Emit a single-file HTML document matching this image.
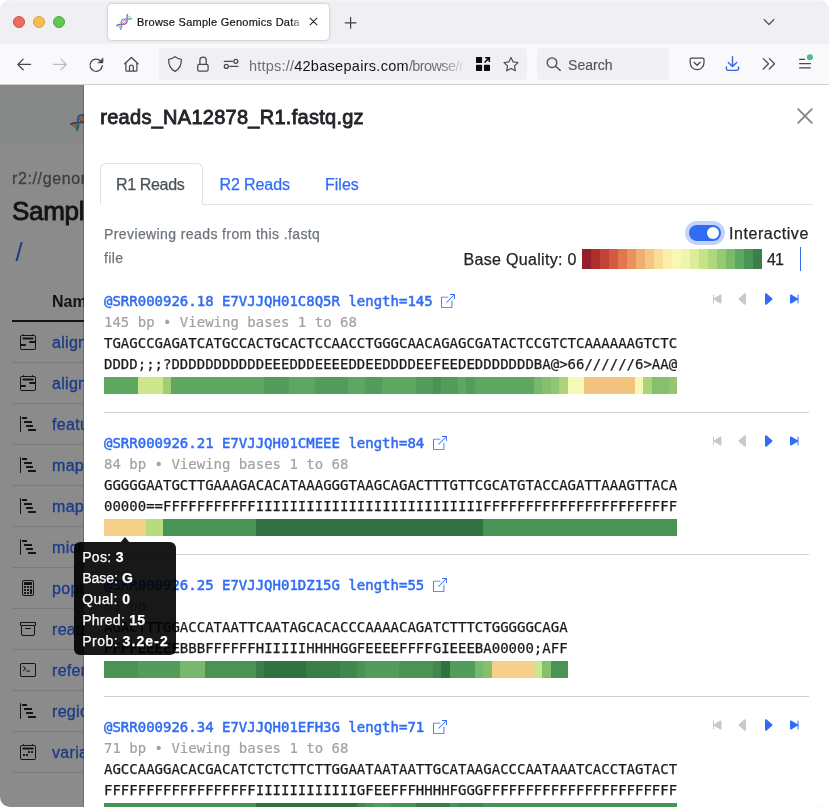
<!DOCTYPE html>
<html lang="en"><head><meta charset="utf-8"><title>Browse Sample Genomics Data</title>
<style>
*{box-sizing:border-box}
html,body{margin:0;padding:0;width:829px;height:807px;overflow:hidden;background:#fff;font-family:"Liberation Sans",sans-serif;color:#222529}
.win{position:absolute;left:0;top:0;width:829px;height:807px;border-radius:10px;overflow:hidden;will-change:transform;background:linear-gradient(#f0f0f4 0,#f0f0f4 85px,#fff 85px,#fff 100%)}
.abs{position:absolute}
.tl{position:absolute;top:16px;width:12px;height:12px;border-radius:50%}
.tabbar{position:absolute;left:0;top:0;width:829px;height:44px;background:#f0f0f4;box-shadow:inset 0 1px 0 #f5f5f8}
.tab{position:absolute;left:108px;top:4px;width:221px;height:36px;background:#fff;border-radius:4px;box-shadow:0 0 3px rgba(0,0,0,.27)}
.tabt{position:absolute;left:29px;top:10.9px;font-size:11px;line-height:14px;white-space:nowrap;color:#15141a;width:171px;overflow:hidden;letter-spacing:.26px;-webkit-text-stroke-width:.2px}
.toolbar{position:absolute;left:0;top:44px;width:829px;height:41px;background:#f9f9fb;border-bottom:1px solid #cfcfd2}
.url{position:absolute;left:159px;top:4px;width:368px;height:32px;border-radius:4px;background:#f0f0f4}
.search{position:absolute;left:537px;top:4px;width:132px;height:32px;border-radius:4px;background:#f0f0f4}
.page{position:absolute;left:0;top:85px;width:829px;height:722px;background:#fff;overflow:hidden}
/* underlying page */
.under{position:absolute;left:0;top:0;width:84px;height:722px;background:#fff;overflow:hidden}
.unav{position:absolute;left:0;top:0;width:829px;height:59px;background:#f6f9f7}
.tr{position:absolute;left:12px;width:800px;height:41px;border-bottom:1px solid #dfe2e6}
.tr svg{position:absolute;left:8px;top:12.5px}
.tr a{position:absolute;left:40px;top:9px;font-size:16px;line-height:24px;color:#316cf4;white-space:nowrap;letter-spacing:.3px;-webkit-text-stroke:.3px #316cf4}
.backdrop{position:absolute;left:0;top:0;width:84px;height:722px;background:rgba(0,0,0,.455)}
/* panel */
.panel{position:absolute;left:84px;top:0;width:745px;height:722px;background:#fff;box-shadow:-1px 0 0 rgba(0,0,0,.22)}
.title{position:absolute;left:16.3px;top:17.2px;font-size:20px;line-height:30px;font-weight:normal;-webkit-text-stroke:.85px #222529;letter-spacing:.27px;white-space:nowrap;color:#222529}
.tabs{position:absolute;left:16px;top:78px;width:713px;height:42px;border-bottom:1px solid #dfe2e6}
.tabs .act{position:absolute;left:0;top:0;width:102.5px;height:42px;border:1px solid #dfe2e6;border-bottom-color:#fff;border-radius:6px 6px 0 0;background:#fff}
.tabs span{position:absolute;top:10.3px;font-size:16px;line-height:24px;white-space:nowrap}
.prev{position:absolute;left:20px;top:137.2px;font-size:14px;line-height:24px;color:#6e757c;width:260px;letter-spacing:.4px}
.sw{position:absolute;left:605.2px;top:140.3px;width:32px;height:16px;border-radius:8px;background:#316cf4;box-shadow:0 0 0 3.9px #c4d4f9}
.sw:after{content:"";position:absolute;right:2px;top:2px;width:12px;height:12px;border-radius:50%;background:#fff}
.lbl{position:absolute;font-size:16px;line-height:24px;white-space:nowrap}
.lbl,.prev,.tabs span,.tip{-webkit-text-stroke-width:.25px}
.legend{position:absolute;left:498px;top:164px;width:180px;height:19.7px}
.legend i,.qb i{position:absolute;top:0;height:100%;display:block}
.read{position:absolute;left:20px;width:709px;height:142px;font-family:"DejaVu Sans Mono","Liberation Mono",monospace;font-size:14px;line-height:21px}
.read>div{white-space:pre;height:21px}
.rh{color:#316cf4;font-weight:normal;-webkit-text-stroke:.5px #316cf4}
.rh span{letter-spacing:-.0013px}
.ext{position:absolute;left:337px;top:2.6px;fill:#316cf4}
.ri{color:#a2a2a2;-webkit-text-stroke-width:.2px}
.rs{color:#1b1b1b;-webkit-text-stroke-width:.25px}
.read>div.qb{position:absolute;left:0;top:85.6px;height:16.8px;width:600px}
.nv{position:absolute;top:-.4px}
.read>div.hr{position:absolute;left:0;top:120.6px;width:705px;height:1px;background:#d1d2d3}
/* tooltip */
.tip{position:absolute;left:74px;top:457px;width:102px;height:113px;background:#000;border-radius:6px;opacity:.9;color:#fff;font-size:14px;line-height:21px;padding:5px 0 0 8.2px;white-space:nowrap}
.tip:before{content:"";position:absolute;left:45.6px;top:-5.5px;border-left:5.5px solid transparent;border-right:5.5px solid transparent;border-bottom:6px solid #000}
.tip b{font-weight:bold}
</style></head><body>
<div class="win">
 <div class="tabbar">
  <div class="tl" style="left:13px;background:#ed6b5f;border:.5px solid #d05247"></div>
  <div class="tl" style="left:33px;background:#f5bf4f;border:.5px solid #d6a243"></div>
  <div class="tl" style="left:53px;background:#62c554;border:.5px solid #52a73f"></div>
  <div class="tab">
   <svg class="abs" style="left:8px;top:10px" width="16" height="16" viewBox="0 0 16 16"><g fill="none" stroke-linecap="round"><path d="M12.300 1.800l1.500 1.500M11.600 3.300l1.300 1.300" stroke="#7cc36a" stroke-width=".9"/><path d="M11.300 4.600l.9.900M13.400 2.300l1.300 1.300" stroke="#f2b04c" stroke-width=".9"/><path d="M6.600 6.700l2.600 2.600M7.800 6l2.200 2.200" stroke="#f2b04c" stroke-width=".9"/><path d="M6.100 8l1.900 1.900" stroke="#e8706a" stroke-width=".9"/><path d="M9 6l1.200 1.200" stroke="#7cc36a" stroke-width=".9"/><path d="M1.800 11.800l2.600 2.600M3.200 11.300l1.900 1.900" stroke="#7cc36a" stroke-width=".9"/><path d="M2.600 12.300l1.500 1.500M4.400 11.200l1 1" stroke="#f2b04c" stroke-width=".9"/><path d="M11.500.5C10.300 3 11.800 6 10.800 8.200 9.800 10.600 7 10.600 4.500 10.400 3 10.300 1.500 10.800.5 11.500" stroke="#8a5ad0" stroke-width="1.250"/><path d="M15.600 4.600C13.500 6 10 5 7.500 5.300 4.800 5.800 5 8.500 5.500 10.500 5.900 12.500 5.300 14.300 4.500 15.500" stroke="#4e9fe6" stroke-width="1.250"/></g></svg>
   <div class="tabt">Browse Sample Genomics Data - 42basepairs</div>
   <div class="abs" style="left:183px;top:8px;width:16px;height:20px;background:linear-gradient(90deg,rgba(255,255,255,0),#fff 80%)"></div>
   <svg class="abs" style="left:200.600px;top:13.200px" width="9" height="9" viewBox="0 0 9 9" stroke="#2b2a33" stroke-width="1.100" stroke-linecap="round"><path d="M1.100 1.100l6.800 6.800M7.900 1.100l-6.800 6.800"/></svg>
  </div>
  <svg class="abs" style="left:344px;top:16px" width="14" height="14" viewBox="0 0 14 14" stroke="#3f3e49" stroke-width="1.200" stroke-linecap="round"><path d="M6.600 1.400v10.800M1.200 6.800h10.800"/></svg>
  <svg class="abs" style="left:763px;top:17.500px" width="12" height="9" viewBox="0 0 12 9" fill="none" stroke="#5b5b66" stroke-width="1.400" stroke-linecap="butt" stroke-linejoin="miter"><path d="M.8 1.300l5.200 5.200 5.200-5.200"/></svg>
 </div>
 <div class="toolbar">
  <div class="url"></div>
  <div class="search"></div>
  <div class="abs" style="left:249px;top:12.500px;font-size:14.500px;line-height:18px;white-space:nowrap;color:#6e6d78;width:218px;overflow:hidden;letter-spacing:.2px">https://<span style="color:#15141a;letter-spacing:.29px">42basepairs.com</span><span style="letter-spacing:-.6px">/browse/reads</span></div>
  <div class="abs" style="left:440px;top:9px;width:30px;height:24px;background:linear-gradient(90deg,rgba(240,240,244,0),#f0f0f4 85%)"></div>
  <div class="abs" style="left:568px;top:12.300px;font-size:14px;line-height:18px;color:#55545f;letter-spacing:.05px;-webkit-text-stroke-width:.15px">Search</div>
  <svg class="abs" style="left:0;top:0" width="829" height="41" viewBox="0 44 829 41" fill="none" stroke="#484852" stroke-width="1.250" stroke-linecap="round" stroke-linejoin="round">
   <path d="M30.500 64.450H17.900M23.200 59.100l-5.350 5.350 5.350 5.350"/>
   <path d="M53.400 64.450h12.900M61 59.100l5.350 5.350L61 69.800" stroke="#bdbdc4"/>
   <path d="M100.700 61.200A6.100 6.100 0 1 0 102.200 65.600"/>
   <path d="M103 58.200v4.700h-4.900z" fill="#484852" stroke-width=".6"/>
   <path d="M124.700 63.800l6.700-6.300 6.700 6.300M125.900 63v7.200a1 1 0 0 0 1 1h9a1 1 0 0 0 1-1V63M129.500 71v-4a1.900 1.900 0 0 1 3.800 0v4"/>
   <path d="M175 56.700c2 1.400 4.200 2.300 6.300 2.600.3 5.300-1.600 9.600-6.300 12.100-4.700-2.500-6.600-6.800-6.300-12.100 2.100-.3 4.300-1.200 6.300-2.600z"/>
   <rect x="197.700" y="64.300" width="10.400" height="6.800" rx="1.600"/><path d="M199.900 64.200v-3.900a3.150 3.150 0 0 1 6.300 0v3.900"/>
   <path d="M224.200 61.300h8.200M229.700 66.400h8.200"/><circle cx="235.800" cy="61.300" r="2"/><circle cx="226.300" cy="66.400" r="2"/>
   <g fill="#0c0c0d" stroke="none"><rect x="476" y="57" width="6.100" height="6.100" rx=".6"/><rect x="476" y="64.800" width="6.100" height="6.100" rx=".6"/><rect x="483.900" y="64.800" width="6.100" height="6.100" rx=".6"/><path d="M485.200 57h4.900v4.900h-1.600v-2.200l-3.400 3.400-1.100-1.100 3.400-3.400h-2.200z"/></g>
   <path d="M511 57.400l2.150 4.500 4.850.65-3.550 3.400.9 4.850-4.350-2.350-4.350 2.350.9-4.850-3.550-3.400 4.850-.65z" stroke-width="1.150"/>
   <circle cx="552" cy="62.700" r="4.800" stroke-width="1.300"/><path d="M555.500 66.200l4.900 4.200" stroke-width="1.300"/>
   <path d="M691.500 58.200h11.200a1.300 1.300 0 0 1 1.300 1.300v3.300a6.900 6.900 0 0 1-13.800 0v-3.300a1.300 1.300 0 0 1 1.300-1.300z"/><path d="M694 62.300l3.100 3 3.100-3"/>
   <g stroke="#2f63d8" stroke-width="1.350"><path d="M732.500 56.600v9.800M728.300 62.400l4.200 4.200 4.200-4.200M726.400 66.800v1.900a1.600 1.600 0 0 0 1.600 1.600h9a1.600 1.600 0 0 0 1.600-1.600v-1.900"/></g>
   <path d="M763.300 58.600l5.200 5.200-5.200 5.200M769.300 58.600l5.200 5.200-5.200 5.200"/>
   <path d="M799.600 59.400h5M799.600 63.600h10.800M799.600 67.800h10.800"/>
   <circle cx="809.900" cy="57.200" r="3" fill="#4fb98f" stroke="none"/>
  </svg>
 </div>

 <div class="page">
  <div class="under">
   <div class="unav"></div>
   <svg class="abs" style="left:70.100px;top:21.900px" width="24" height="24" viewBox="0 0 16 16"><g fill="none" stroke-linecap="round"><path d="M12.300 1.800l1.500 1.500M11.600 3.300l1.300 1.300" stroke="#7cc36a" stroke-width=".9"/><path d="M11.300 4.600l.9.900M13.400 2.300l1.300 1.300" stroke="#f2b04c" stroke-width=".9"/><path d="M6.600 6.700l2.600 2.600M7.800 6l2.200 2.200" stroke="#f2b04c" stroke-width=".9"/><path d="M6.100 8l1.900 1.900" stroke="#e8706a" stroke-width=".9"/><path d="M9 6l1.200 1.200" stroke="#7cc36a" stroke-width=".9"/><path d="M1.800 11.800l2.600 2.600M3.200 11.300l1.900 1.900" stroke="#7cc36a" stroke-width=".9"/><path d="M2.600 12.300l1.500 1.500M4.400 11.200l1 1" stroke="#f2b04c" stroke-width=".9"/><path d="M11.500.5C10.300 3 11.800 6 10.800 8.200 9.800 10.600 7 10.600 4.500 10.400 3 10.300 1.500 10.800.5 11.500" stroke="#8a5ad0" stroke-width="1.250"/><path d="M15.600 4.600C13.500 6 10 5 7.500 5.300 4.800 5.800 5 8.500 5.500 10.500 5.900 12.500 5.300 14.300 4.500 15.500" stroke="#4e9fe6" stroke-width="1.250"/></g></svg>
   <div class="abs" style="left:12px;top:82.200px;font-size:16px;line-height:24px;color:#6e757c;white-space:nowrap;letter-spacing:.62px;-webkit-text-stroke-width:.3px">r2://genomics-data/</div>
   <div class="abs" style="left:12px;top:108px;font-size:26px;line-height:36px;font-weight:normal;-webkit-text-stroke:.85px #222529;color:#222529;white-space:nowrap;letter-spacing:-.3px">Sample Data</div>
   <div class="abs" style="left:15.500px;top:152px;font-size:26px;line-height:30px;color:#316cf4">/</div>
   <div class="abs" style="left:52px;top:204.700px;font-size:16px;line-height:24px;font-weight:bold;color:#222529">Name</div>
   <div class="abs" style="left:12px;top:235px;width:800px;height:2px;background:#222529"></div>
   <div class="tr" style="top:236.5px"><svg viewBox="0 0 16 16" width="16" height="16" fill="#222529"><path d="M3.5 0a.5.5 0 0 1 .5.5V1h8V.5a.5.5 0 0 1 1 0V1h1a2 2 0 0 1 2 2v11a2 2 0 0 1-2 2H2a2 2 0 0 1-2-2V3a2 2 0 0 1 2-2h1V.5a.5.5 0 0 1 .5-.5M2 2a1 1 0 0 0-1 1v11a1 1 0 0 0 1 1h12a1 1 0 0 0 1-1V3a1 1 0 0 0-1-1z"/><path d="M2.5 4a.5.5 0 0 1 .5-.5h10a.5.5 0 0 1 .5.5v1a.5.5 0 0 1-.5.5H3a.5.5 0 0 1-.5-.5zM9 8a1 1 0 0 1 1-1h5v2h-5a1 1 0 0 1-1-1m-8 2h4a1 1 0 1 1 0 2H1z"/></svg><a>alignments_bam</a></div>
<div class="tr" style="top:277.5px"><svg viewBox="0 0 16 16" width="16" height="16" fill="#222529"><path d="M3.5 0a.5.5 0 0 1 .5.5V1h8V.5a.5.5 0 0 1 1 0V1h1a2 2 0 0 1 2 2v11a2 2 0 0 1-2 2H2a2 2 0 0 1-2-2V3a2 2 0 0 1 2-2h1V.5a.5.5 0 0 1 .5-.5M2 2a1 1 0 0 0-1 1v11a1 1 0 0 0 1 1h12a1 1 0 0 0 1-1V3a1 1 0 0 0-1-1z"/><path d="M2.5 4a.5.5 0 0 1 .5-.5h10a.5.5 0 0 1 .5.5v1a.5.5 0 0 1-.5.5H3a.5.5 0 0 1-.5-.5zM9 8a1 1 0 0 1 1-1h5v2h-5a1 1 0 0 1-1-1m-8 2h4a1 1 0 1 1 0 2H1z"/></svg><a>alignments_cram</a></div>
<div class="tr" style="top:318.5px"><svg viewBox="0 0 16 16" width="16" height="16" fill="#222529"><path d="M.5 0a.5.5 0 0 1 .5.5v15a.5.5 0 0 1-1 0V.5A.5.5 0 0 1 .5 0M2 1.5a.5.5 0 0 1 .5-.5h4a.5.5 0 0 1 .5.5v1a.5.5 0 0 1-.5.5h-4a.5.5 0 0 1-.5-.5zm2 4a.5.5 0 0 1 .5-.5h7a.5.5 0 0 1 .5.5v1a.5.5 0 0 1-.5.5h-7a.5.5 0 0 1-.5-.5zm2 4a.5.5 0 0 1 .5-.5h6a.5.5 0 0 1 .5.5v1a.5.5 0 0 1-.5.5h-6a.5.5 0 0 1-.5-.5zm2 4a.5.5 0 0 1 .5-.5h7a.5.5 0 0 1 .5.5v1a.5.5 0 0 1-.5.5h-7a.5.5 0 0 1-.5-.5z"/></svg><a>features_bed</a></div>
<div class="tr" style="top:359.5px"><svg viewBox="0 0 16 16" width="16" height="16" fill="#222529"><path d="M.5 0a.5.5 0 0 1 .5.5v15a.5.5 0 0 1-1 0V.5A.5.5 0 0 1 .5 0M2 1.5a.5.5 0 0 1 .5-.5h4a.5.5 0 0 1 .5.5v1a.5.5 0 0 1-.5.5h-4a.5.5 0 0 1-.5-.5zm2 4a.5.5 0 0 1 .5-.5h7a.5.5 0 0 1 .5.5v1a.5.5 0 0 1-.5.5h-7a.5.5 0 0 1-.5-.5zm2 4a.5.5 0 0 1 .5-.5h6a.5.5 0 0 1 .5.5v1a.5.5 0 0 1-.5.5h-6a.5.5 0 0 1-.5-.5zm2 4a.5.5 0 0 1 .5-.5h7a.5.5 0 0 1 .5.5v1a.5.5 0 0 1-.5.5h-7a.5.5 0 0 1-.5-.5z"/></svg><a>mappability</a></div>
<div class="tr" style="top:400.5px"><svg viewBox="0 0 16 16" width="16" height="16" fill="#222529"><path d="M.5 0a.5.5 0 0 1 .5.5v15a.5.5 0 0 1-1 0V.5A.5.5 0 0 1 .5 0M2 1.5a.5.5 0 0 1 .5-.5h4a.5.5 0 0 1 .5.5v1a.5.5 0 0 1-.5.5h-4a.5.5 0 0 1-.5-.5zm2 4a.5.5 0 0 1 .5-.5h7a.5.5 0 0 1 .5.5v1a.5.5 0 0 1-.5.5h-7a.5.5 0 0 1-.5-.5zm2 4a.5.5 0 0 1 .5-.5h6a.5.5 0 0 1 .5.5v1a.5.5 0 0 1-.5.5h-6a.5.5 0 0 1-.5-.5zm2 4a.5.5 0 0 1 .5-.5h7a.5.5 0 0 1 .5.5v1a.5.5 0 0 1-.5.5h-7a.5.5 0 0 1-.5-.5z"/></svg><a>mappings</a></div>
<div class="tr" style="top:441.5px"><svg viewBox="0 0 16 16" width="16" height="16" fill="#222529"><path d="M.5 0a.5.5 0 0 1 .5.5v15a.5.5 0 0 1-1 0V.5A.5.5 0 0 1 .5 0M2 1.5a.5.5 0 0 1 .5-.5h4a.5.5 0 0 1 .5.5v1a.5.5 0 0 1-.5.5h-4a.5.5 0 0 1-.5-.5zm2 4a.5.5 0 0 1 .5-.5h7a.5.5 0 0 1 .5.5v1a.5.5 0 0 1-.5.5h-7a.5.5 0 0 1-.5-.5zm2 4a.5.5 0 0 1 .5-.5h6a.5.5 0 0 1 .5.5v1a.5.5 0 0 1-.5.5h-6a.5.5 0 0 1-.5-.5zm2 4a.5.5 0 0 1 .5-.5h7a.5.5 0 0 1 .5.5v1a.5.5 0 0 1-.5.5h-7a.5.5 0 0 1-.5-.5z"/></svg><a>microsatellites</a></div>
<div class="tr" style="top:482.5px"><svg viewBox="0 0 16 16" width="16" height="16" fill="#222529"><path d="M12 1a1 1 0 0 1 1 1v12a1 1 0 0 1-1 1H4a1 1 0 0 1-1-1V2a1 1 0 0 1 1-1zM4 0a2 2 0 0 0-2 2v12a2 2 0 0 0 2 2h8a2 2 0 0 0 2-2V2a2 2 0 0 0-2-2z"/><path d="M4 2.5a.5.5 0 0 1 .5-.5h7a.5.5 0 0 1 .5.5v2a.5.5 0 0 1-.5.5h-7a.5.5 0 0 1-.5-.5zm0 4a.5.5 0 0 1 .5-.5h1a.5.5 0 0 1 .5.5v1a.5.5 0 0 1-.5.5h-1a.5.5 0 0 1-.5-.5zm0 3a.5.5 0 0 1 .5-.5h1a.5.5 0 0 1 .5.5v1a.5.5 0 0 1-.5.5h-1a.5.5 0 0 1-.5-.5zm0 3a.5.5 0 0 1 .5-.5h1a.5.5 0 0 1 .5.5v1a.5.5 0 0 1-.5.5h-1a.5.5 0 0 1-.5-.5zm3-6a.5.5 0 0 1 .5-.5h1a.5.5 0 0 1 .5.5v1a.5.5 0 0 1-.5.5h-1a.5.5 0 0 1-.5-.5zm0 3a.5.5 0 0 1 .5-.5h1a.5.5 0 0 1 .5.5v1a.5.5 0 0 1-.5.5h-1a.5.5 0 0 1-.5-.5zm0 3a.5.5 0 0 1 .5-.5h1a.5.5 0 0 1 .5.5v1a.5.5 0 0 1-.5.5h-1a.5.5 0 0 1-.5-.5zm3-6a.5.5 0 0 1 .5-.5h1a.5.5 0 0 1 .5.5v1a.5.5 0 0 1-.5.5h-1a.5.5 0 0 1-.5-.5zm0 3a.5.5 0 0 1 .5-.5h1a.5.5 0 0 1 .5.5v4a.5.5 0 0 1-.5.5h-1a.5.5 0 0 1-.5-.5z"/></svg><a>population</a></div>
<div class="tr" style="top:523.5px"><svg viewBox="0 0 16 16" width="16" height="16" fill="#222529"><path d="M0 2a1 1 0 0 1 1-1h14a1 1 0 0 1 1 1v2a1 1 0 0 1-1 1v7.5a2.5 2.5 0 0 1-2.5 2.5h-9A2.5 2.5 0 0 1 1 12.500V5a1 1 0 0 1-1-1zm2 3v7.5A1.500 1.500 0 0 0 3.500 14h9a1.500 1.500 0 0 0 1.500-1.500V5zm13-3H1v2h14zM5 7.500a.5.5 0 0 1 .5-.5h5a.5.5 0 0 1 0 1h-5a.5.5 0 0 1-.5-.5"/></svg><a>reads_fastq</a></div>
<div class="tr" style="top:564.5px"><svg viewBox="0 0 16 16" width="16" height="16" fill="#222529"><path d="M6 9a.5.5 0 0 1 .5-.5h3a.5.5 0 0 1 0 1h-3A.5.5 0 0 1 6 9M3.854 4.146a.5.5 0 1 0-.708.708L4.793 6.500 3.146 8.146a.5.5 0 1 0 .708.708l2-2a.5.5 0 0 0 0-.708z"/><path d="M2 1a2 2 0 0 0-2 2v10a2 2 0 0 0 2 2h12a2 2 0 0 0 2-2V3a2 2 0 0 0-2-2zm12 1a1 1 0 0 1 1 1v10a1 1 0 0 1-1 1H2a1 1 0 0 1-1-1V3a1 1 0 0 1 1-1z"/></svg><a>reference</a></div>
<div class="tr" style="top:605.5px"><svg viewBox="0 0 16 16" width="16" height="16" fill="#222529"><path d="M.5 0a.5.5 0 0 1 .5.5v15a.5.5 0 0 1-1 0V.5A.5.5 0 0 1 .5 0M2 1.5a.5.5 0 0 1 .5-.5h4a.5.5 0 0 1 .5.5v1a.5.5 0 0 1-.5.5h-4a.5.5 0 0 1-.5-.5zm2 4a.5.5 0 0 1 .5-.5h7a.5.5 0 0 1 .5.5v1a.5.5 0 0 1-.5.5h-7a.5.5 0 0 1-.5-.5zm2 4a.5.5 0 0 1 .5-.5h6a.5.5 0 0 1 .5.5v1a.5.5 0 0 1-.5.5h-6a.5.5 0 0 1-.5-.5zm2 4a.5.5 0 0 1 .5-.5h7a.5.5 0 0 1 .5.5v1a.5.5 0 0 1-.5.5h-7a.5.5 0 0 1-.5-.5z"/></svg><a>regions_bed</a></div>
<div class="tr" style="top:646.5px"><svg viewBox="0 0 16 16" width="16" height="16" fill="#222529"><path d="M3.5 0a.5.5 0 0 1 .5.5V1h8V.5a.5.5 0 0 1 1 0V1h1a2 2 0 0 1 2 2v11a2 2 0 0 1-2 2H2a2 2 0 0 1-2-2V3a2 2 0 0 1 2-2h1V.5a.5.5 0 0 1 .5-.5M2 2a1 1 0 0 0-1 1v11a1 1 0 0 0 1 1h12a1 1 0 0 0 1-1V3a1 1 0 0 0-1-1z"/><path d="M2.5 4a.5.5 0 0 1 .5-.5h10a.5.5 0 0 1 .5.5v1a.5.5 0 0 1-.5.5H3a.5.5 0 0 1-.5-.5zM11 7.500a.5.5 0 0 1 .5-.5h1a.5.5 0 0 1 .5.5v1a.5.5 0 0 1-.5.5h-1a.5.5 0 0 1-.5-.5zm-3 0a.5.5 0 0 1 .5-.5h1a.5.5 0 0 1 .5.5v1a.5.5 0 0 1-.5.5h-1a.5.5 0 0 1-.5-.5zm-5 3a.5.5 0 0 1 .5-.5h1a.5.5 0 0 1 .5.5v1a.5.5 0 0 1-.5.5h-1a.5.5 0 0 1-.5-.5zm3 0a.5.5 0 0 1 .5-.5h1a.5.5 0 0 1 .5.5v1a.5.5 0 0 1-.5.5h-1a.5.5 0 0 1-.5-.5z"/></svg><a>variants_vcf</a></div>
  </div>
  <div class="backdrop"></div>
  <div class="panel">
   <div class="title">reads_NA12878_R1.fastq.gz</div>
   <svg class="abs" style="left:712.900px;top:23px" width="16" height="16" viewBox="0 0 16 16" stroke="#868686" stroke-width="1.900" stroke-linecap="round"><path d="M1.200 1.200l13.600 13.600M14.800 1.200 1.200 14.800"/></svg>
   <div class="tabs">
    <div class="act"></div>
    <span style="left:16px;color:#495057;letter-spacing:-.35px">R1 Reads</span>
    <span style="left:119.500px;color:#316cf4;letter-spacing:-.1px">R2 Reads</span>
    <span style="left:225px;color:#316cf4">Files</span>
   </div>
   <div class="prev">Previewing reads from this .fastq<br>file</div>
   <div class="sw"></div>
   <div class="lbl" style="left:645px;top:137px;letter-spacing:.55px">Interactive</div>
   <div class="lbl" style="left:379.500px;top:163px;letter-spacing:.32px">Base Quality: 0</div>
   <div class="legend"><i style="left:0px;width:9.3px;background:#971d2b"></i><i style="left:9px;width:9.3px;background:#ae2d2f"></i><i style="left:18px;width:9.3px;background:#c34136"></i><i style="left:27px;width:9.3px;background:#d45a41"></i><i style="left:36px;width:9.3px;background:#e1764f"></i><i style="left:45px;width:9.3px;background:#ea925e"></i><i style="left:54px;width:9.3px;background:#f0af6f"></i><i style="left:63px;width:9.3px;background:#f4c882"></i><i style="left:72px;width:9.3px;background:#f9de98"></i><i style="left:81px;width:9.3px;background:#fbefac"></i><i style="left:90px;width:9.3px;background:#f8f7b6"></i><i style="left:99px;width:9.3px;background:#edf6ac"></i><i style="left:108px;width:9.3px;background:#dbed99"></i><i style="left:117px;width:9.3px;background:#c6e388"></i><i style="left:126px;width:9.3px;background:#afd77b"></i><i style="left:135px;width:9.3px;background:#95c973"></i><i style="left:144px;width:9.3px;background:#7aba6b"></i><i style="left:153px;width:9.3px;background:#5fa862"></i><i style="left:162px;width:9.3px;background:#499456"></i><i style="left:171px;width:9.3px;background:#3a7e49"></i></div>
   <div class="lbl" style="left:683px;top:163px;letter-spacing:-.9px">41</div>
   <div class="abs" style="left:716px;top:162px;width:1px;height:24px;background:#316cf4"></div>
   <div class="read" style="top:206.39999999999998px">
<div class="rh"><span>@SRR000926.18 E7VJJQH01C8Q5R length=145</span><svg class="ext" style="left:337.1px" viewBox="0 0 16 16" width="14" height="14"><path fill-rule="evenodd" d="M8.636 3.5a.5.5 0 0 0-.5-.5H1.5A1.5 1.5 0 0 0 0 4.5v10A1.5 1.5 0 0 0 1.5 16h10a1.5 1.5 0 0 0 1.5-1.5V7.864a.5.5 0 0 0-1 0V14.5a.5.5 0 0 1-.5.5h-10a.5.5 0 0 1-.5-.5v-10a.5.5 0 0 1 .5-.5h6.636a.5.5 0 0 0 .5-.5"/><path fill-rule="evenodd" d="M16 .5a.5.5 0 0 0-.5-.5h-5a.5.5 0 0 0 0 1h3.793L6.146 9.146a.5.5 0 1 0 .708.708L15 1.707V5.5a.5.5 0 0 0 1 0z"/></svg></div>
<div class="ri">145 bp • Viewing bases 1 to 68</div>
<div class="rs">TGAGCCGAGATCATGCCACTGCACTCCAACCTGGGCAACAGAGCGATACTCCGTCTCAAAAAAGTCTC</div>
<div class="rs">DDDD;;;?DDDDDDDDDDDEEEDDDEEEEDDEEDDDDEEFEEDEDDDDDDDBA@&gt;66//////6&gt;AA@</div>
<div class="qb"><i style="left:0.00px;width:34.01px;background:#5da761"></i><i style="left:33.71px;width:25.59px;background:#cde68d"></i><i style="left:59.00px;width:8.73px;background:#9fce75"></i><i style="left:67.43px;width:93.02px;background:#5da761"></i><i style="left:160.15px;width:25.59px;background:#529d5c"></i><i style="left:185.43px;width:25.59px;background:#5da761"></i><i style="left:210.72px;width:34.01px;background:#529d5c"></i><i style="left:244.43px;width:17.16px;background:#5da761"></i><i style="left:261.29px;width:17.16px;background:#529d5c"></i><i style="left:278.15px;width:34.01px;background:#5da761"></i><i style="left:311.86px;width:17.16px;background:#529d5c"></i><i style="left:328.72px;width:8.73px;background:#499355"></i><i style="left:337.15px;width:17.16px;background:#529d5c"></i><i style="left:354.01px;width:8.73px;background:#5da761"></i><i style="left:362.43px;width:8.73px;background:#529d5c"></i><i style="left:370.86px;width:59.30px;background:#5da761"></i><i style="left:429.86px;width:8.73px;background:#77b86a"></i><i style="left:438.29px;width:8.73px;background:#84c06e"></i><i style="left:446.72px;width:8.73px;background:#92c772"></i><i style="left:455.15px;width:8.73px;background:#abd47a"></i><i style="left:463.58px;width:17.16px;background:#f6f8b5"></i><i style="left:480.44px;width:50.87px;background:#f4c47f"></i><i style="left:531.01px;width:8.73px;background:#f6f8b5"></i><i style="left:539.44px;width:8.73px;background:#abd47a"></i><i style="left:547.87px;width:17.16px;background:#84c06e"></i><i style="left:564.72px;width:8.73px;background:#92c772"></i></div>
<svg class="nv" style="left:604.7px" viewBox="0 0 16 16" width="16" height="16" fill="#c9c9c9"><path d="M4 4a.5.5 0 0 1 1 0v3.248l6.267-3.636c.54-.313 1.232.066 1.232.696v7.384c0 .63-.692 1.01-1.232.697L5 8.753V12a.5.5 0 0 1-1 0z"/></svg><svg class="nv" style="left:631px" viewBox="0 0 16 16" width="16" height="16" fill="#c9c9c9"><path d="m3.86 8.753 5.482 4.796c.646.566 1.658.106 1.658-.753V3.204a1 1 0 0 0-1.659-.753l-5.48 4.796a1 1 0 0 0 0 1.506z"/></svg><svg class="nv" style="left:655.6px" viewBox="0 0 16 16" width="16" height="16" fill="#316cf4"><path d="m12.14 8.753-5.482 4.796c-.646.566-1.658.106-1.658-.753V3.204a1 1 0 0 1 1.659-.753l5.48 4.796a1 1 0 0 1 0 1.506z"/></svg><svg class="nv" style="left:681.7px" viewBox="0 0 16 16" width="16" height="16" fill="#316cf4"><path d="M12.5 4a.5.5 0 0 0-1 0v3.248L5.233 3.612C4.693 3.3 4 3.678 4 4.308v7.384c0 .63.692 1.01 1.233.697L11.5 8.753V12a.5.5 0 0 0 1 0z"/></svg>
<div class="hr"></div>
</div>
<div class="read" style="top:348.4px">
<div class="rh"><span>@SRR000926.21 E7VJJQH01CMEEE length=84</span><svg class="ext" style="left:328.7px" viewBox="0 0 16 16" width="14" height="14"><path fill-rule="evenodd" d="M8.636 3.5a.5.5 0 0 0-.5-.5H1.5A1.5 1.5 0 0 0 0 4.5v10A1.5 1.5 0 0 0 1.5 16h10a1.5 1.5 0 0 0 1.5-1.5V7.864a.5.5 0 0 0-1 0V14.5a.5.5 0 0 1-.5.5h-10a.5.5 0 0 1-.5-.5v-10a.5.5 0 0 1 .5-.5h6.636a.5.5 0 0 0 .5-.5"/><path fill-rule="evenodd" d="M16 .5a.5.5 0 0 0-.5-.5h-5a.5.5 0 0 0 0 1h3.793L6.146 9.146a.5.5 0 1 0 .708.708L15 1.707V5.5a.5.5 0 0 0 1 0z"/></svg></div>
<div class="ri">84 bp • Viewing bases 1 to 68</div>
<div class="rs">GGGGGAATGCTTGAAAGACACATAAAGGGTAAGCAGACTTTGTTCGCATGTACCAGATTAAAGTTACA</div>
<div class="rs">00000==FFFFFFFFFFFIIIIIIIIIIIIIIIIIIIIIIIIIIIFFFFFFFFFFFFFFFFFFFFFFF</div>
<div class="qb"><i style="left:0.00px;width:42.44px;background:#f6d089"></i><i style="left:42.14px;width:17.16px;background:#b7db7f"></i><i style="left:59.00px;width:93.02px;background:#499355"></i><i style="left:151.72px;width:227.87px;background:#327242"></i><i style="left:379.29px;width:194.16px;background:#499355"></i></div>
<svg class="nv" style="left:604.7px" viewBox="0 0 16 16" width="16" height="16" fill="#c9c9c9"><path d="M4 4a.5.5 0 0 1 1 0v3.248l6.267-3.636c.54-.313 1.232.066 1.232.696v7.384c0 .63-.692 1.01-1.232.697L5 8.753V12a.5.5 0 0 1-1 0z"/></svg><svg class="nv" style="left:631px" viewBox="0 0 16 16" width="16" height="16" fill="#c9c9c9"><path d="m3.86 8.753 5.482 4.796c.646.566 1.658.106 1.658-.753V3.204a1 1 0 0 0-1.659-.753l-5.48 4.796a1 1 0 0 0 0 1.506z"/></svg><svg class="nv" style="left:655.6px" viewBox="0 0 16 16" width="16" height="16" fill="#316cf4"><path d="m12.14 8.753-5.482 4.796c-.646.566-1.658.106-1.658-.753V3.204a1 1 0 0 1 1.659-.753l5.48 4.796a1 1 0 0 1 0 1.506z"/></svg><svg class="nv" style="left:681.7px" viewBox="0 0 16 16" width="16" height="16" fill="#316cf4"><path d="M12.5 4a.5.5 0 0 0-1 0v3.248L5.233 3.612C4.693 3.3 4 3.678 4 4.308v7.384c0 .63.692 1.01 1.233.697L11.5 8.753V12a.5.5 0 0 0 1 0z"/></svg>
<div class="hr"></div>
</div>
<div class="read" style="top:490.4px">
<div class="rh"><span>@SRR000926.25 E7VJJQH01DZ15G length=55</span><svg class="ext" style="left:328.7px" viewBox="0 0 16 16" width="14" height="14"><path fill-rule="evenodd" d="M8.636 3.5a.5.5 0 0 0-.5-.5H1.5A1.5 1.5 0 0 0 0 4.5v10A1.5 1.5 0 0 0 1.5 16h10a1.5 1.5 0 0 0 1.5-1.5V7.864a.5.5 0 0 0-1 0V14.5a.5.5 0 0 1-.5.5h-10a.5.5 0 0 1-.5-.5v-10a.5.5 0 0 1 .5-.5h6.636a.5.5 0 0 0 .5-.5"/><path fill-rule="evenodd" d="M16 .5a.5.5 0 0 0-.5-.5h-5a.5.5 0 0 0 0 1h3.793L6.146 9.146a.5.5 0 1 0 .708.708L15 1.707V5.5a.5.5 0 0 0 1 0z"/></svg></div>
<div class="ri">55 bp</div>
<div class="rs">AGACTTTGGACCATAATTCAATAGCACACCCAAAACAGATCTTTCTGGGGGCAGA</div>
<div class="rs">FFFFEEEEEBBBFFFFFFHIIIIIHHHHGGFEEEEFFFFGIEEEBA00000;AFF</div>
<div class="qb"><i style="left:0.00px;width:34.01px;background:#499355"></i><i style="left:33.71px;width:42.44px;background:#529d5c"></i><i style="left:75.86px;width:25.59px;background:#77b86a"></i><i style="left:101.14px;width:50.87px;background:#499355"></i><i style="left:151.72px;width:8.73px;background:#397d49"></i><i style="left:160.15px;width:42.44px;background:#327242"></i><i style="left:202.29px;width:34.01px;background:#397d49"></i><i style="left:236.00px;width:17.16px;background:#408850"></i><i style="left:252.86px;width:8.73px;background:#499355"></i><i style="left:261.29px;width:34.01px;background:#529d5c"></i><i style="left:295.00px;width:34.01px;background:#499355"></i><i style="left:328.72px;width:8.73px;background:#408850"></i><i style="left:337.15px;width:8.73px;background:#327242"></i><i style="left:345.58px;width:25.59px;background:#529d5c"></i><i style="left:370.86px;width:8.73px;background:#77b86a"></i><i style="left:379.29px;width:8.73px;background:#84c06e"></i><i style="left:387.72px;width:42.44px;background:#f6d089"></i><i style="left:429.86px;width:8.73px;background:#cde68d"></i><i style="left:438.29px;width:8.73px;background:#84c06e"></i><i style="left:446.72px;width:17.16px;background:#499355"></i></div>

<div class="hr"></div>
</div>
<div class="read" style="top:632.4px">
<div class="rh"><span>@SRR000926.34 E7VJJQH01EFH3G length=71</span><svg class="ext" style="left:328.7px" viewBox="0 0 16 16" width="14" height="14"><path fill-rule="evenodd" d="M8.636 3.5a.5.5 0 0 0-.5-.5H1.5A1.5 1.5 0 0 0 0 4.5v10A1.5 1.5 0 0 0 1.5 16h10a1.5 1.5 0 0 0 1.5-1.5V7.864a.5.5 0 0 0-1 0V14.5a.5.5 0 0 1-.5.5h-10a.5.5 0 0 1-.5-.5v-10a.5.5 0 0 1 .5-.5h6.636a.5.5 0 0 0 .5-.5"/><path fill-rule="evenodd" d="M16 .5a.5.5 0 0 0-.5-.5h-5a.5.5 0 0 0 0 1h3.793L6.146 9.146a.5.5 0 1 0 .708.708L15 1.707V5.5a.5.5 0 0 0 1 0z"/></svg></div>
<div class="ri">71 bp • Viewing bases 1 to 68</div>
<div class="rs">AGCCAAGGACACGACATCTCTCTTCTTGGAATAATAATTGCATAAGACCCAATAAATCACCTAGTACT</div>
<div class="rs">FFFFFFFFFFFFFFFFFFIIIIIIIIIIIIGFEEFFFHHHHFGGGFFFFFFFFFFFFFFFFFFFFFFF</div>
<div class="qb"><i style="left:0.00px;width:152.02px;background:#499355"></i><i style="left:151.72px;width:101.44px;background:#327242"></i><i style="left:252.86px;width:8.73px;background:#408850"></i><i style="left:261.29px;width:8.73px;background:#499355"></i><i style="left:269.72px;width:17.16px;background:#529d5c"></i><i style="left:286.58px;width:25.59px;background:#499355"></i><i style="left:311.86px;width:34.01px;background:#397d49"></i><i style="left:345.58px;width:8.73px;background:#499355"></i><i style="left:354.01px;width:25.59px;background:#408850"></i><i style="left:379.29px;width:194.16px;background:#499355"></i></div>
<svg class="nv" style="left:604.7px" viewBox="0 0 16 16" width="16" height="16" fill="#c9c9c9"><path d="M4 4a.5.5 0 0 1 1 0v3.248l6.267-3.636c.54-.313 1.232.066 1.232.696v7.384c0 .63-.692 1.01-1.232.697L5 8.753V12a.5.5 0 0 1-1 0z"/></svg><svg class="nv" style="left:631px" viewBox="0 0 16 16" width="16" height="16" fill="#c9c9c9"><path d="m3.86 8.753 5.482 4.796c.646.566 1.658.106 1.658-.753V3.204a1 1 0 0 0-1.659-.753l-5.48 4.796a1 1 0 0 0 0 1.506z"/></svg><svg class="nv" style="left:655.6px" viewBox="0 0 16 16" width="16" height="16" fill="#316cf4"><path d="m12.14 8.753-5.482 4.796c-.646.566-1.658.106-1.658-.753V3.204a1 1 0 0 1 1.659-.753l5.48 4.796a1 1 0 0 1 0 1.506z"/></svg><svg class="nv" style="left:681.7px" viewBox="0 0 16 16" width="16" height="16" fill="#316cf4"><path d="M12.5 4a.5.5 0 0 0-1 0v3.248L5.233 3.612C4.693 3.3 4 3.678 4 4.308v7.384c0 .63.692 1.01 1.233.697L11.5 8.753V12a.5.5 0 0 0 1 0z"/></svg>
<div class="hr"></div>
</div>
  </div>
  <div class="tip"><div style="letter-spacing:.34px">Pos: <b>3</b></div><div>Base: <b>G</b></div><div style="letter-spacing:.43px">Qual: <b>0</b></div><div style="letter-spacing:.27px">Phred: <b>15</b></div><div style="letter-spacing:.5px">Prob: <b style="letter-spacing:1.1px">3.2e-2</b></div></div>
 </div>
</div>
</body></html>
